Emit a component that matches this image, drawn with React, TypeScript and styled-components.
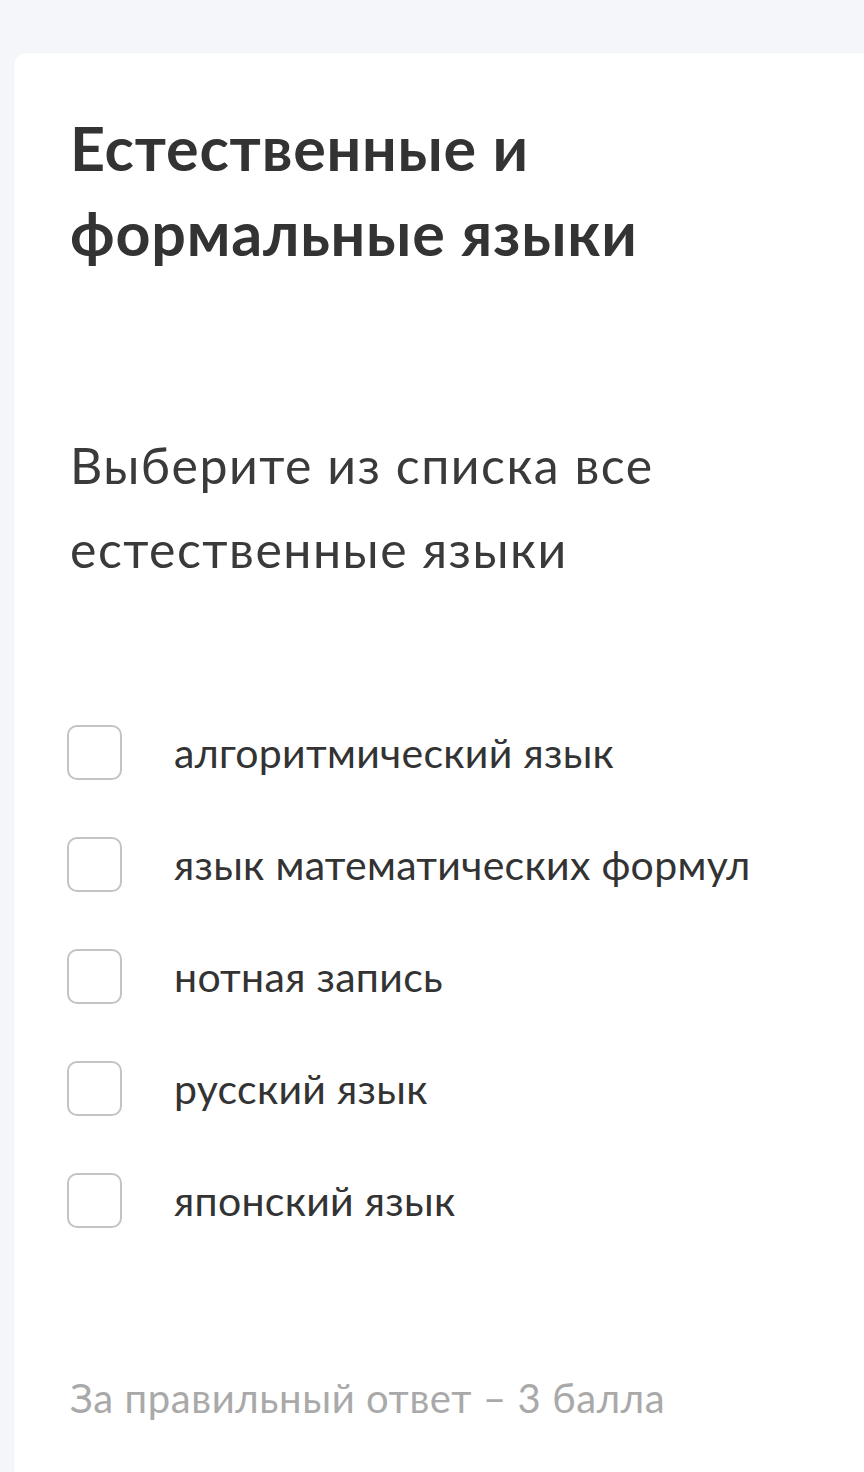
import styled, { createGlobalStyle } from "styled-components";

const GlobalStyle = createGlobalStyle`
 html, body {
  margin: 0;
  padding: 0;
  background: #f5f6fa;
 }
 body {
  font-family: Lato, "Open Sans", sans-serif;
  color: #333333;
 }
`;

const options = [
 "алгоритмический язык",
 "язык математических формул",
 "нотная запись",
 "русский язык",
 "японский язык",
];

const App = () => {
 return (
  <>
   <GlobalStyle />
   <Page>
    <Card>
     <Title>Естественные и формальные языки</Title>
     <Question>Выберите из списка все естественные языки</Question>
     <OptionList>
      {options.map((text) => (
       <Option key={text}>
        <input type="checkbox" />
        <Box />
        <span>{text}</span>
       </Option>
      ))}
     </OptionList>
     <Score>За правильный ответ – 3 балла</Score>
    </Card>
   </Page>
  </>
 );
};

export default App;

const Page = styled.div`
 min-height: 1472px;
 padding: 53px 0 0 14px;
 box-sizing: border-box;
 display: flex;
`;

const Card = styled.div`
 flex: 1;
 background: #ffffff;
 border-radius: 12px 0 0 0;
 box-shadow: 0 0 2px rgba(0, 0, 0, 0.05);
 padding: 52px 40px 0 56px;
 display: flex;
 flex-direction: column;
`;

const Title = styled.h1`
 margin: 0;
 max-width: 640px;
 font-size: 61px;
 line-height: 85px;
 letter-spacing: 0.8px;
 font-weight: 700;
 color: #333333;
`;

const Question = styled.p`
 margin: 148px 0 0;
 max-width: 700px;
 font-size: 50px;
 line-height: 84px;
 letter-spacing: 1.5px;
 font-weight: 400;
 color: #3a3a3a;
`;

const OptionList = styled.div`
 margin-top: 134px;
 display: flex;
 flex-direction: column;
 gap: 57px;
`;

const Option = styled.label`
 display: flex;
 align-items: center;
 gap: 52px;
 font-size: 41px;
 letter-spacing: 0.3px;
 color: #333333;
 cursor: pointer;

 input {
  display: none;
 }
`;

const Box = styled.span`
 width: 55px;
 height: 55px;
 box-sizing: border-box;
 border: 2px solid #c4c4c4;
 border-radius: 10px;
 flex-shrink: 0;
 margin-left: -3px;
`;

const Score = styled.p`
 margin: 146px 0 0;
 font-size: 40px;
 letter-spacing: 0.6px;
 color: #a9a9a9;
`;
